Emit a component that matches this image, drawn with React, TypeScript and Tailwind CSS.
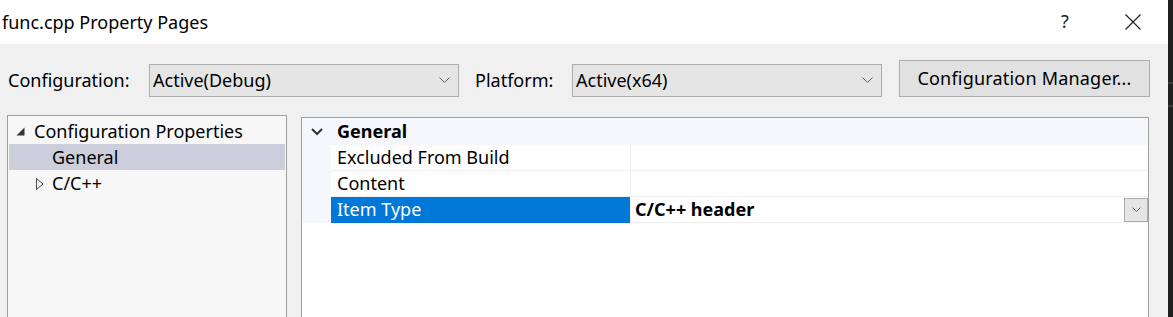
import React from "react";

const font = { fontFamily: '"Noto Sans", "Open Sans", sans-serif' };

function Chevron({ className = "" }: { className?: string }) {
  return (
    <svg width="11" height="7" viewBox="0 0 11 7" className={className}>
      <path d="M0.5 0.5 L5.5 5.5 L10.5 0.5" fill="none" stroke="#606060" strokeWidth="1" />
    </svg>
  );
}

function Combo({ text, w }: { text: string; w: string }) {
  return (
    <div className={`${w} h-[33px] bg-[#e5e5e5] border border-[#adadad] flex items-center pl-[3px] pr-[8px]`}>
      <span className="flex-1 text-[18px] text-[#000]">{text}</span>
      <Chevron />
    </div>
  );
}

export default function App() {
  return (
    <div className="w-[1173px] h-[317px] overflow-hidden flex bg-[#1f1f1f] text-black" style={font}>
      <div className="w-[1168px] h-full flex flex-col bg-[#f0f0f0]">
        {/* Title bar */}
        <div className="h-[44px] bg-white flex items-center pl-[2px] shrink-0">
          <span className="flex-1 text-[18px] text-black leading-none -mt-[1px]">func.cpp Property Pages</span>
          <span className="text-[18px] text-[#222] w-[20px] text-center mr-[50px] -mt-[2px]">?</span>
          <svg width="16" height="16" viewBox="0 0 16 16" className="mr-[27px]">
            <path d="M0.5 0.5 L15.5 15.5 M15.5 0.5 L0.5 15.5" stroke="#222" strokeWidth="1.2" />
          </svg>
        </div>
        {/* Config row */}
        <div className="flex items-center pt-[20px] pl-[8px] shrink-0">
          <span className="text-[18px] w-[141px]">Configuration:</span>
          <Combo text="Active(Debug)" w="w-[310px]" />
          <span className="text-[18px] ml-[16px] w-[97px]">Platform:</span>
          <Combo text="Active(x64)" w="w-[310px]" />
          <div className="ml-[17px] w-[251px] h-[37px] -mt-[4px] bg-[#e1e1e1] border border-[#adadad] flex items-center justify-center text-[18px] tracking-[0.2px]">
            Configuration Manager...
          </div>
        </div>
        {/* Panels */}
        <div className="flex flex-1 pt-[18px] pl-[7px]">
          {/* Tree */}
          <div className="w-[280px] h-[210px] bg-[#f7f7f7] border border-[#a0a0a0] pt-[2px] px-[1px] text-[18px]">
            <div className="h-[26px] flex items-center">
              <svg width="9" height="9" viewBox="0 0 9 9" className="ml-[7px] mr-[9px] mt-[1px]">
                <path d="M8.5 0.5 L8.5 8.5 L0.5 8.5 Z" fill="#333" />
              </svg>
              <span>Configuration Properties</span>
            </div>
            <div className="h-[26px] flex items-center bg-[#cccedb]">
              <span className="ml-[43px]">General</span>
            </div>
            <div className="h-[26px] flex items-center">
              <svg width="8" height="12" viewBox="0 0 8 12" className="ml-[27px] mr-[8px] mt-[1px]">
                <path d="M0.5 0.5 L7 6 L0.5 11.5 Z" fill="none" stroke="#444" strokeWidth="1" />
              </svg>
              <span>C/C++</span>
            </div>
          </div>
          {/* Property grid */}
          <div className="ml-[14px] mt-[2px] w-[848px] h-[210px] bg-white border border-[#a0a0a0] text-[18px]">
            <div className="h-[27px] bg-[#f5f7fc] flex items-center">
              <svg width="12" height="8" viewBox="0 0 12 8" className="ml-[9px] mr-[14px]">
                <path d="M1 1 L6 6 L11 1" fill="none" stroke="#333" strokeWidth="2" />
              </svg>
              <span className="font-bold">General</span>
            </div>
            {[
              { name: "Excluded From Build", value: "" },
              { name: "Content", value: "" },
              { name: "Item Type", value: "C/C++ header", sel: true },
            ].map((r) => (
              <div key={r.name} className="h-[26px] flex">
                <div className="w-[29px] bg-[#f5f7fc]" />
                <div
                  className={`w-[299px] flex items-center pl-[6px] border-b ${
                    r.sel ? "bg-[#0078d7] text-white border-[#0078d7]" : "border-[#f0f0f0]"
                  }`}
                >
                  {r.name}
                </div>
                <div className="flex-1 flex items-center pl-[4px] border-b border-l border-[#f0f0f0] font-bold">
                  <span className="flex-1">{r.value}</span>
                  {r.sel && (
                    <div className="w-[24px] h-[24px] bg-[#e5e5e5] border border-[#adadad] flex items-center justify-center">
                      <svg width="9" height="5" viewBox="0 0 9 5">
                        <path d="M0.5 0.5 L4.5 4.5 L8.5 0.5" fill="none" stroke="#666" strokeWidth="1" />
                      </svg>
                    </div>
                  )}
                </div>
              </div>
            ))}
          </div>
        </div>
      </div>
      <div className="flex-1 flex flex-col">
        <div className="h-[82px]" />
        <div className="h-[2px] bg-[#3a3a3a]" />
        <div className="h-[21px]" />
        <div className="h-[2px] bg-[#3a3a3a]" />
      </div>
    </div>
  );
}
